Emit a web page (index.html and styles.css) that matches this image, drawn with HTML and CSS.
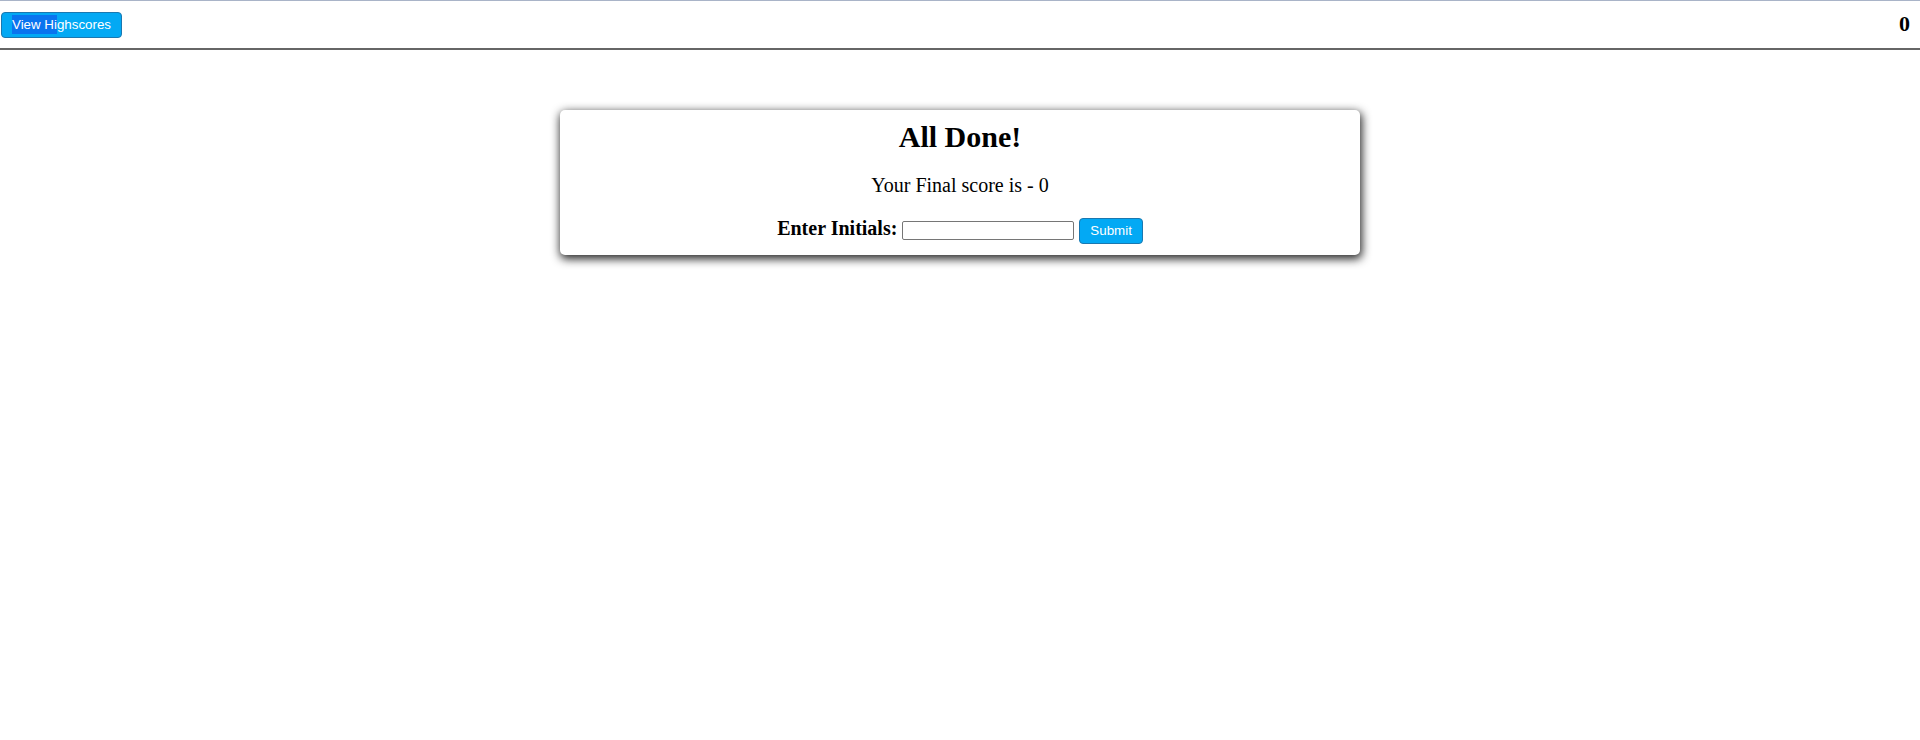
FILE: index.html
```html
<!DOCTYPE html>
<html lang="en">
<head>
<meta charset="utf-8">
<title>Quiz</title>
<link rel="stylesheet" href="styles.css">
</head>
<body>
<header class="topbar">
  <button class="btn btn-scores"><span class="sel">View Hi</span>ghscores</button>
  <span class="timer">0</span>
</header>
<main class="stage">
  <section class="card">
    <h2 class="card-title">All Done!</h2>
    <p class="card-score">Your Final score is - 0</p>
    <div class="card-form">
      <label class="card-label" for="initials">Enter Initials:</label>
      <input class="card-input" id="initials" type="text">
      <button class="btn btn-submit">Submit</button>
    </div>
  </section>
</main>
</body>
</html>
```

FILE: styles.css
```css
html, body {
  margin: 0;
  padding: 0;
  background: #ffffff;
}
html {
  height: 100%;
}
body {
  min-height: 100%;
  box-sizing: border-box;
  font-family: "Liberation Serif", "Times New Roman", serif;
  color: #000;
  border-top: 1px solid #a9b4c8;
}
.topbar {
  height: 47px;
  display: flex;
  align-items: center;
  justify-content: space-between;
  padding: 0 10px 0 1px;
  border-bottom: 2px solid #666666;
}
.btn {
  font-family: "Liberation Sans", Arial, sans-serif;
  font-size: 13.333px;
  line-height: 14px;
  color: #ffffff;
  background: #03a9f4;
  border: 1px solid #1a78b0;
  border-radius: 4px;
  padding: 5px 10px;
  cursor: pointer;
}
.btn-scores {
  margin-top: 1px;
}
.sel {
  background: #0a74ef;
  padding: 2px 0;
}
.timer {
  font-weight: bold;
  font-size: 22px;
  margin-top: -2px;
}
.stage {
  display: flex;
  justify-content: center;
  padding-top: 60px;
  padding-bottom: 40px;
}
.card {
  width: 800px;
  box-sizing: border-box;
  padding: 10px 10px 11px;
  background: #ffffff;
  border-radius: 5px;
  box-shadow: 1px 3px 10px 1px rgba(0, 0, 0, 0.85);
  text-align: center;
  font-size: 20px;
}
.card-title {
  margin: 0;
  font-size: 30px;
  font-weight: bold;
}
.card-score {
  margin: 20px 0;
}
.card-label {
  font-weight: bold;
}
.card-input {
  width: 172px;
  height: 19px;
  box-sizing: border-box;
  border: 1px solid #767676;
  border-radius: 2px;
  padding: 1px 2px;
  font-size: 13.333px;
  vertical-align: baseline;
}
.btn-submit {
  vertical-align: baseline;
}
```
